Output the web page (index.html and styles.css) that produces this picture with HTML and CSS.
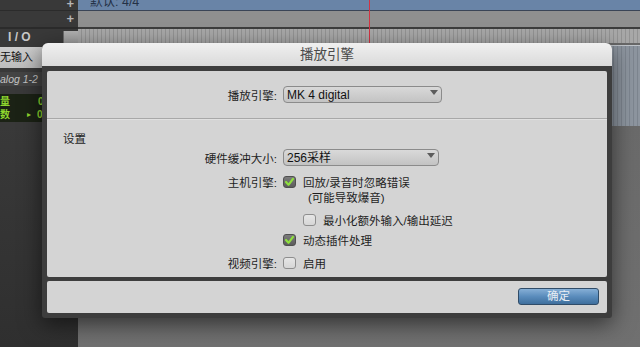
FILE: index.html
```html
<!DOCTYPE html>
<html lang="zh-CN">
<head>
    <meta charset="UTF-8">
    <meta name="viewport" content="width=device-width, initial-scale=1.0">
    <title>播放引擎</title>
    <link rel="stylesheet" href="styles.css">
</head>
<body>
    <div class="app">
        <div class="tracks-left">
            <div class="l-bar l-bar1"><span class="plus">+</span></div>
            <div class="l-bar l-bar2"><span class="plus">+</span></div>
            <div class="l-io">
                <span class="io-label">I / O</span>
                <span class="io-box"></span>
            </div>
            <div class="l-input">无输入</div>
            <div class="l-alog">alog 1-2</div>
            <div class="l-meter">
                <div class="meter-row"><span class="m-name">量</span><span class="m-val">0</span></div>
                <div class="meter-row"><span class="m-name">数</span><span class="m-arrow">▸</span><span class="m-val">0</span></div>
            </div>
            <div class="l-rest"></div>
        </div>

        <div class="tracks-right">
            <div class="r-bar1"><span class="meter-text">默认: 4/4</span></div>
            <div class="r-bar2"></div>
            <div class="r-ruler"></div>
            <div class="r-track"></div>
            <div class="r-rest"></div>
            <div class="playhead"></div>
        </div>

        <div class="dialog">
            <div class="dialog-title">播放引擎</div>
            <div class="dialog-body">
                <div class="panel panel-main">
                    <div class="section-engine">
                        <div class="row">
                            <span class="label">播放引擎:</span>
                            <div class="select select-engine">
                                <span>MK 4 digital</span>
                                <svg class="arrow" width="8" height="5" viewBox="0 0 8 5"><polygon points="0,0 8,0 4,5" fill="#5c5c5c"/></svg>
                            </div>
                        </div>
                    </div>
                    <div class="section-settings">
                        <div class="heading">设置</div>
                        <div class="row row-buffer">
                            <span class="label">硬件缓冲大小:</span>
                            <div class="select select-buffer">
                                <span>256采样</span>
                                <svg class="arrow" width="8" height="5" viewBox="0 0 8 5"><polygon points="0,0 8,0 4,5" fill="#5c5c5c"/></svg>
                            </div>
                        </div>
                        <div class="row row-check row-host">
                            <span class="label">主机引擎:</span>
                            <span class="cb checked"><svg width="11" height="10" viewBox="0 0 11 10"><path d="M2 5 L4.5 7.8 L9 1.8" fill="none" stroke="#8fe03e" stroke-width="2.2" stroke-linecap="round" stroke-linejoin="round"/></svg></span>
                            <span class="cb-text">回放/录音时忽略错误</span>
                        </div>
                        <div class="row row-note">
                            <span class="label"></span>
                            <span class="note">(可能导致爆音)</span>
                        </div>
                        <div class="row row-check row-latency">
                            <span class="label"></span>
                            <span class="cb indent"></span>
                            <span class="cb-text">最小化额外输入/输出延迟</span>
                        </div>
                        <div class="row row-check row-plugin">
                            <span class="label"></span>
                            <span class="cb checked"><svg width="11" height="10" viewBox="0 0 11 10"><path d="M2 5 L4.5 7.8 L9 1.8" fill="none" stroke="#8fe03e" stroke-width="2.2" stroke-linecap="round" stroke-linejoin="round"/></svg></span>
                            <span class="cb-text">动态插件处理</span>
                        </div>
                        <div class="row row-check row-video">
                            <span class="label">视频引擎:</span>
                            <span class="cb"></span>
                            <span class="cb-text">启用</span>
                        </div>
                    </div>
                </div>
                <div class="panel panel-foot">
                    <button class="btn-ok">确定</button>
                </div>
            </div>
        </div>
    </div>
</body>
</html>
```

FILE: styles.css
```css
body {
    margin: 0;
    font-family: "Liberation Sans", "Noto Sans CJK SC", sans-serif;
    background-color: #6e6e6e;
    overflow: hidden;
}

.app {
    position: relative;
    display: grid;
    grid-template-columns: 78px 1fr;
    width: 640px;
    height: 347px;
    overflow: hidden;
}

/* left track list */
.tracks-left {
    display: flex;
    flex-direction: column;
    background-color: #393939;
}

.l-bar {
    display: flex;
    justify-content: flex-end;
    align-items: center;
    padding-right: 4px;
    overflow: hidden;
}

.l-bar1 {
    height: 10px;
    border-bottom: 1px solid #2b2b2b;
    align-items: flex-start;
}

.l-bar1 .plus {
    margin-top: -2px;
}

.l-bar2 {
    height: 16px;
    border-bottom: 2px solid #2b2b2b;
}

.plus {
    color: #b4b4b4;
    font-size: 13px;
    font-weight: bold;
    line-height: 12px;
}

.l-io {
    display: flex;
    justify-content: space-between;
    align-items: center;
    height: 14px;
    padding: 1px 0 0 8px;
}

.io-label {
    color: #c9c9c9;
    font-size: 12px;
    font-weight: bold;
}

.io-box {
    width: 14px;
    height: 13px;
    background: linear-gradient(#b0b0b0, #9c9c9c);
    border-left: 1px solid #6a6a6a;
}

.l-input {
    margin-top: 3px;
    height: 21px;
    line-height: 21px;
    width: 62px;
    background: linear-gradient(#cdcdcd, #bdbdbd);
    color: #111;
    font-size: 11px;
}

.l-alog {
    margin-top: 4px;
    height: 14px;
    line-height: 14px;
    background-color: #444;
    color: #c2c2c2;
    font-size: 10.5px;
    font-style: italic;
}

.l-meter {
    margin-top: 8px;
    height: 28px;
    padding-top: 1px;
    box-sizing: border-box;
    background-color: #1b2215;
    display: flex;
    flex-direction: column;
}

.meter-row {
    display: flex;
    height: 13px;
    line-height: 13px;
    font-size: 10px;
    color: #8fd72e;
}

.m-name {
    font-weight: bold;
}

.m-arrow {
    margin-left: 17px;
    font-size: 8px;
}

.m-val {
    padding-left: 28px;
    font-weight: bold;
}

.meter-row .m-arrow + .m-val {
    padding-left: 6px;
}

.l-rest {
    flex: 1;
    margin-top: 3px;
    background: linear-gradient(#393939, #2f2f2f);
}

/* right timeline */
.tracks-right {
    position: relative;
    display: flex;
    flex-direction: column;
}

.r-bar1 {
    height: 10px;
    background-color: #6984a7;
    border-bottom: 1px solid #3a4456;
    padding-left: 12px;
    overflow: hidden;
}

.meter-text {
    display: block;
    margin-top: -6px;
    font-size: 12.5px;
    line-height: 16px;
    color: #243146;
}

.r-bar2 {
    height: 16px;
    background-color: #8f8f8f;
    border-bottom: 2px solid #3d3d3d;
}

.r-ruler {
    height: 14px;
    background: repeating-linear-gradient(90deg, #a8a8a8 0 3px, #939393 3px 4px);
    border-bottom: 2px solid #686868;
}

.r-track {
    height: 80px;
    border-top: 1px solid #bfc4ca;
    background: repeating-linear-gradient(90deg, #8d959f 0 3px, #7d858f 3px 4px);
}

.r-rest {
    flex: 1;
    background: linear-gradient(#6a6a6a, #707070);
}

.playhead {
    position: absolute;
    left: 291px;
    top: 0;
    width: 1px;
    height: 43px;
    background-color: #d23342;
}

/* dialog */
.dialog {
    position: absolute;
    left: 42px;
    top: 43px;
    width: 570px;
    height: 275px;
    display: flex;
    flex-direction: column;
    background-color: #3d3d3d;
    border-radius: 6px 6px 3px 3px;
    box-shadow: 0 6px 22px rgba(0, 0, 0, 0.55);
}

.dialog-title {
    height: 23px;
    line-height: 23px;
    text-align: center;
    font-size: 13.5px;
    color: #4a4a4a;
    background: linear-gradient(#f0f0f0, #dadada);
    border-radius: 6px 6px 0 0;
}

.dialog-body {
    flex: 1;
    display: flex;
    flex-direction: column;
    gap: 4px;
    padding: 5px;
}

.panel {
    background-color: #d4d4d4;
    border-radius: 2px;
}

.panel-main {
    height: 206px;
    font-size: 11.5px;
    color: #1e1e1e;
}

.section-engine {
    height: 32px;
    padding-top: 15px;
    border-bottom: 1px solid #a8a8a8;
    box-shadow: 0 1px 0 #e0e0e0;
}

.section-settings {
    padding-top: 13px;
}

.heading {
    padding-left: 16px;
    line-height: 14px;
}

.row {
    display: flex;
    align-items: center;
}

.label {
    width: 230px;
    margin-right: 6px;
    text-align: right;
    flex-shrink: 0;
}

.select {
    display: flex;
    justify-content: space-between;
    align-items: flex-start;
    height: 17px;
    padding: 0 3px 0 3px;
    border: 1px solid #8b8b8b;
    border-radius: 4px;
    background: linear-gradient(#d9d9d9, #c3c3c3);
    font-size: 12px;
    line-height: 17px;
    color: #111;
    box-sizing: border-box;
}

.select-engine {
    width: 159px;
}

.select-buffer {
    width: 156px;
}

.arrow {
    margin-top: 3px;
}

.row-buffer {
    margin-top: 3px;
}

.row-check {
    height: 14px;
}

.row-host {
    margin-top: 9px;
}

.row-note {
    margin-top: 1px;
    height: 14px;
}

.note {
    padding-left: 25px;
}

.row-latency {
    margin-top: 9px;
}

.row-plugin {
    margin-top: 6px;
}

.row-video {
    margin-top: 9px;
}

.cb {
    display: flex;
    align-items: center;
    justify-content: center;
    width: 13px;
    height: 12px;
    box-sizing: border-box;
    border: 1px solid #8e8e8e;
    border-radius: 3px;
    background: linear-gradient(#e6e6e6, #d6d6d6);
    margin-right: 7px;
    flex-shrink: 0;
}

.cb.checked {
    border-color: #4f4f4f;
    background: linear-gradient(#7c7c7c, #5c5c5c);
}

.cb.indent {
    margin-left: 20px;
}

.cb-text {
    white-space: nowrap;
}

.panel-foot {
    height: 32px;
    display: flex;
    justify-content: flex-end;
    align-items: flex-start;
    padding: 7px 8px 0 0;
    box-sizing: border-box;
}

.btn-ok {
    width: 81px;
    height: 17px;
    padding: 0;
    border: 1px solid #304c68;
    border-radius: 3px;
    background: linear-gradient(#86afd6, #5a8cbc 50%, #3f6f9d);
    color: #e9eef4;
    font-family: "Liberation Sans", "Noto Sans CJK SC", sans-serif;
    font-size: 11.5px;
    line-height: 15px;
}
```
